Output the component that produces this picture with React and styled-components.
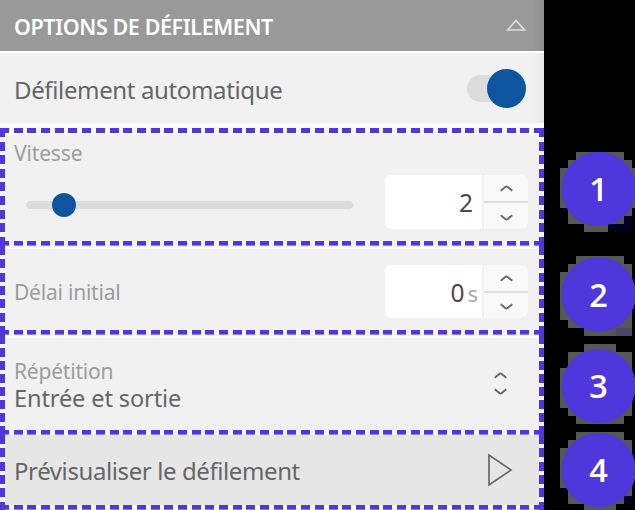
import React from "react";
import styled, { createGlobalStyle } from "styled-components";

const violet = "#5037dc";
const blue = "#0d559f";

const Global = createGlobalStyle`
  body { margin: 0; background: #000; overflow: hidden; }
  * { box-sizing: border-box; }
`;

const Page = styled.div`
  width: 635px;
  height: 510px;
  display: flex;
  background: #000;
  font-family: "Noto Sans", "Open Sans", sans-serif;
  color: #666;
`;

const Panel = styled.section`
  width: 544px;
  height: 510px;
  display: flex;
  flex-direction: column;
  background: #f1f1f1;
`;

const Header = styled.header`
  height: 51px;
  flex: none;
  display: flex;
  align-items: center;
  justify-content: space-between;
  padding: 0 17px 2px 14px;
  background: linear-gradient(90deg, transparent 534px, #8e8e8e), #999;
`;

const Title = styled.h1`
  margin: 4px 0 0;
  font: 600 21.5px/30px "Noto Sans", sans-serif;
  letter-spacing: -0.4px;
  color: #fff;
  white-space: nowrap;
`;

const SwitchRow = styled.div`
  height: 77px;
  flex: none;
  display: flex;
  align-items: center;
  justify-content: space-between;
  padding: 0 18px 0 14px;
  border-top: 2px solid #fff;
  border-bottom: 5px solid #fbfbfb;
  background: linear-gradient(90deg, transparent 534px, #e7e7e7), #f1f1f1;
`;

const Label = styled.span`
  display: block;
  margin-top: ${(p) => p.$drop || 0}px;
  font-size: ${(p) => p.$size}px;
  line-height: 27px;
  letter-spacing: ${(p) => p.$spacing || 0}px;
  color: ${(p) => (p.$muted ? "#9d9d9d" : "#666")};
  white-space: nowrap;
`;

const Toggle = styled.div`
  width: 59px;
  height: 39px;
  display: flex;
  align-items: center;
`;

const ToggleTrack = styled.span`
  width: 40px;
  height: 27px;
  flex: none;
  margin-right: -20px;
  border-radius: 14px;
  background: #dcdcdc;
`;

const Knob = styled.span`
  width: ${(p) => p.$size}px;
  height: ${(p) => p.$size}px;
  flex: none;
  border-radius: 50%;
  background: ${blue};
`;

const dashX = `repeating-linear-gradient(90deg, ${violet} 0 9px, #f7f6fc 9px 13.69px)`;
const dashY = (p) =>
  `repeating-linear-gradient(180deg, ${violet} 0 9px, #f5f4fa 9px ${p.$step}px)`;

/* A settings block outlined with dashes; only the first one draws its top edge. */
const Block = styled.div`
  height: ${(p) => p.$height}px;
  flex: none;
  display: flex;
  align-items: center;
  justify-content: space-between;
  padding: ${(p) => p.$pad};
  background:
    ${dashY} 0 0 / 5px 100% no-repeat,
    ${dashY} 100% 0 / 5px 100% no-repeat,
    ${(p) => p.$first && `${dashX} 0 0 / 100% 5px no-repeat,`}
    ${dashX} 0 100% / 100% 4.6px no-repeat,
    linear-gradient(#fbfbfd, #fbfbfd) 0 ${(p) => p.$line || 0}px / 100% 2px no-repeat,
    ${(p) => p.$fill || "#f1f1f1"};
`;

const SpeedControl = styled.div`
  display: flex;
  flex-direction: column;
  align-self: stretch;
`;

const Slider = styled.div`
  width: 327px;
  height: 24px;
  display: flex;
  align-items: center;
  margin: 26px 0 0 12px;
  padding-left: 26px;
  background: linear-gradient(#dcdcdc, #dcdcdc) 4px 8px / 319px 8px no-repeat,
    radial-gradient(circle at 4px 12px, #dcdcdc 3.7px, transparent 4.2px),
    radial-gradient(circle at 323px 12px, #dcdcdc 3.7px, transparent 4.2px);
`;

const NumberBox = styled.div`
  width: 143px;
  height: ${(p) => p.$height}px;
  margin-top: ${(p) => p.$drop || 0}px;
  display: grid;
  grid-template-columns: 97px 44px;
  column-gap: 2px;
  border-radius: 6px;
  overflow: hidden;
`;

const Value = styled.div`
  display: flex;
  align-items: center;
  justify-content: flex-end;
  padding: 2px ${(p) => p.$right}px 0 0;
  background: #fff;
  font-size: 24.5px;
  line-height: 30px;
  color: #4a4a4a;
`;

const Unit = styled.span`
  margin-left: 3px;
  font-size: 22px;
  color: #aaa;
`;

const Steps = styled.div`
  display: grid;
  grid-template-rows: 1fr 1fr;
  row-gap: 2px;
  background: #dedede;
`;

const Step = styled.div`
  display: grid;
  place-items: center;
  padding-top: ${(p) => p.$inset || 0}px;
  background: #f9f9f9;
`;

const Choice = styled.div`
  display: flex;
  flex-direction: column;
`;

const ChoiceArrows = styled.div`
  display: flex;
  flex-direction: column;
  gap: 9px;
  margin-bottom: 3px;
`;

const Badges = styled.aside`
  width: 91px;
  height: 510px;
  flex: none;
  display: grid;
  grid-template-columns: 75px;
  grid-template-rows: 96px 88px 88px 78px;
  padding: 152px 0 0 16px;
`;

const BadgeBox = styled.div`
  display: grid;
  grid-template-columns: 75px;
  align-content: start;
  margin-top: ${(p) => p.$top}px;
`;

const BadgeArt = styled.svg`
  grid-area: 1 / 1;
  display: block;
`;

const BadgeText = styled.span`
  grid-area: 1 / 1;
  height: 74px;
  margin-top: ${(p) => p.$shift}px;
  padding-left: 2px;
  text-align: center;
  font: 600 32.5px/74px "Open Sans", sans-serif;
  color: #fff;
`;

function Chevron({ down }) {
  return (
    <svg width="13" height="8" viewBox="0 0 13 8" fill="none">
      <path
        d={down ? "M.7 1.3 5.3 5Q6.5 6 7.7 5L12.3 1.3" : "M.7 6.7 5.3 3Q6.5 2 7.7 3L12.3 6.7"}
        stroke="#666"
        strokeWidth="1.8"
      />
    </svg>
  );
}

function Stepper({ height, value, unit, drop }) {
  return (
    <NumberBox $height={height} $drop={drop}>
      <Value $right={unit ? 4 : 9}>
        {value}
        {unit && <Unit>{unit}</Unit>}
      </Value>
      <Steps>
        <Step><Chevron /></Step>
        <Step $inset={3}><Chevron down /></Step>
      </Steps>
    </NumberBox>
  );
}

const badges = [
  {
    n: 1, top: 0, cy: 37, halo: "M16 0H64V8H72V16H75V56H72V72H48V80H24V72H8V56H0V16H8V8H16Z",
    tint: "M64 64H72V80H48V72H64Z", tintColor: "#00001f",
  },
  {
    n: 2, top: 8, cy: 38.5, halo: "M16 0H64V8H72V80H24V72H8V64H0V16H8V8H16Z",
    tint: "M56 72H72V80H56Z", tintColor: "#4d4764",
  },
  { n: 3, top: 8, cy: 42, halo: "M24 0H56V8H72V72H64V80H16V72H8V64H0V24H8V8H24Z" },
  {
    n: 4, top: 8, cy: 38, halo: "M16 0H64V8H72V72H56V78H24V72H8V56H0V16H8V8H16Z",
    tint: "M64 64H72V72H64Z", tintColor: "#00001f",
  },
];

function Badge({ n, top, cy, halo, tint, tintColor }) {
  return (
    <BadgeBox $top={top}>
      <BadgeArt width="75" height="80" viewBox="0 0 75 80">
        <path d={halo} fill="#565656" shapeRendering="crispEdges" />
        <circle cx="38.7" cy={cy} r="37" fill={violet} />
        {tint && <path d={tint} fill={tintColor} shapeRendering="crispEdges" />}
        {tint && <circle cx="38.7" cy={cy} r="37" fill={violet} />}
      </BadgeArt>
      <BadgeText $shift={cy - 37}>{n}</BadgeText>
    </BadgeBox>
  );
}

export default function App() {
  return (
    <Page>
      <Global />
      <Panel>
        <Header>
          <Title>OPTIONS DE DÉFILEMENT</Title>
          <svg width="22" height="14" viewBox="0 0 22 14" fill="none">
            <path d="M2.5 12 11 2.5 19.5 12Z" stroke="#dedede" strokeWidth="1.7" />
          </svg>
        </Header>
        <SwitchRow>
          <Label $size={24} $spacing={-0.36} $drop={2}>Défilement automatique</Label>
          <Toggle>
            <ToggleTrack />
            <Knob $size={39} />
          </Toggle>
        </SwitchRow>

        <Block $height={118} $step={13.6} $first $line={5} $pad="12px 16px 0 14px">
          <SpeedControl>
            <Label $size={21} $muted $spacing={-0.15}>Vitesse</Label>
            <Slider><Knob $size={24} /></Slider>
          </SpeedControl>
          <Stepper height={54} value="2" drop={18} />
        </Block>
        <Block $height={89} $step={13.3} $line={1} $pad="2px 16px 0 14px">
          <Label $size={21} $muted $spacing={-0.22} $drop={2}>Délai initial</Label>
          <Stepper height={53} value="0" unit="s" />
        </Block>
        <Block $height={99.5} $step={13} $line={1} $pad="0 37px 0 14px">
          <Choice>
            <Label $size={21} $muted $spacing={-0.2}>Répétition</Label>
            <Label $size={23.5} $spacing={-0.1}>Entrée et sortie</Label>
          </Choice>
          <ChoiceArrows>
            <Chevron />
            <Chevron down />
          </ChoiceArrows>
        </Block>
        <Block $height={75.5} $step={13.3} $line={-4} $fill="#e6e6e6" $pad="0 31px 4px 14px">
          <Label $size={24} $spacing={-0.4}>Prévisualiser le défilement</Label>
          <svg width="26" height="34" viewBox="0 0 26 34" fill="none">
            <path d="M2 2V32L24 17Z" stroke="#666" strokeWidth="1.7" />
          </svg>
        </Block>
      </Panel>
      <Badges>
        {badges.map((badge) => <Badge key={badge.n} {...badge} />)}
      </Badges>
    </Page>
  );
}
